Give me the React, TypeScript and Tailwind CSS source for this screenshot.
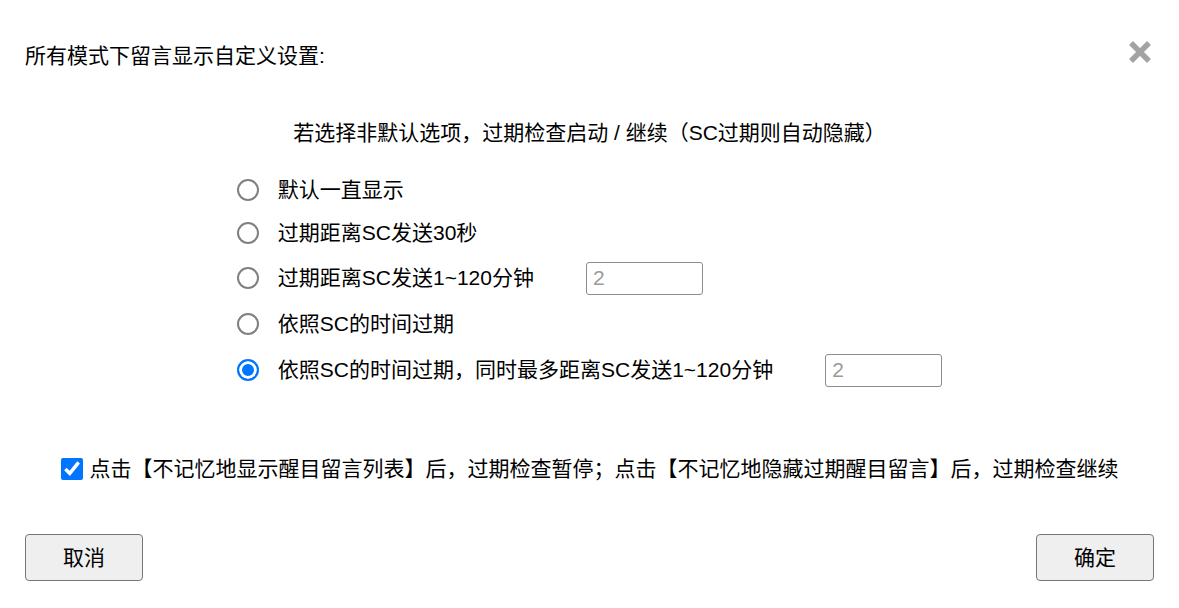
import React from "react";

const rows: { label: string; h: string; input?: boolean; checked?: boolean }[] = [
  { label: "默认一直显示", h: "h-[42px]" },
  { label: "过期距离SC发送30秒", h: "h-[44px]" },
  { label: "过期距离SC发送1~120分钟", h: "h-[46px]", input: true },
  { label: "依照SC的时间过期", h: "h-[46px]" },
  { label: "依照SC的时间过期，同时最多距离SC发送1~120分钟", h: "h-[46px]", input: true, checked: true },
];

export default function App() {
  return (
    <div className="w-[1179px] h-[608px] bg-white px-[25px] text-black text-[21px] font-['Liberation_Sans','Noto_Sans_CJK_SC',sans-serif] overflow-hidden">
      <div className="pt-[40px] h-[72px] flex items-center justify-between">
        <div className="leading-[32px]">所有模式下留言显示自定义设置:</div>
        <svg width="26" height="24" viewBox="0 0 26 24" className="mb-[9px] mr-[1px]">
          <path d="M4 3 L22 21 M22 3 L4 21" stroke="#a3a3a3" strokeWidth="5.5" strokeLinecap="butt" />
        </svg>
      </div>
      <div className="mt-[45px] text-center leading-[32px]">
        若选择非默认选项，过期检查启动 / 继续（SC过期则自动隐藏）
      </div>
      <div className="mt-[20px] mx-auto w-fit flex flex-col items-start">
        {rows.map((r, i) => (
          <label key={i} className={`${r.h} flex items-center`}>
            <input
              type="radio"
              name="mode"
              defaultChecked={r.checked}
              className="appearance-none w-[22px] h-[22px] m-0 rounded-full border-2 border-[#808080] bg-white checked:border-[#0075ff] checked:bg-[#0075ff] checked:shadow-[inset_0_0_0_3px_white]"
            />
            <span className="ml-[19px] leading-[32px]">{r.label}</span>
            {r.input && (
              <input
                type="text"
                placeholder="2"
                className="ml-[52px] w-[117px] h-[33px] border border-[#8c8c8c] rounded-[3px] px-[6px] text-[21px] placeholder:text-[#9a9a9a] outline-none"
              />
            )}
          </label>
        ))}
      </div>
      <div className="mt-[60px] h-[32px] flex items-center justify-center">
        <input type="checkbox" defaultChecked className="w-[22px] h-[22px] m-0" />
        <span className="ml-[7px] leading-[32px]">
          点击【不记忆地显示醒目留言列表】后，过期检查暂停；点击【不记忆地隐藏过期醒目留言】后，过期检查继续
        </span>
      </div>
      <div className="mt-[49px] flex justify-between">
        <button className="w-[118px] h-[47px] bg-[#efefef] border border-[#767676] rounded-[4px] text-[21px]">
          取消
        </button>
        <button className="w-[118px] h-[47px] bg-[#efefef] border border-[#767676] rounded-[4px] text-[21px]">
          确定
        </button>
      </div>
    </div>
  );
}
